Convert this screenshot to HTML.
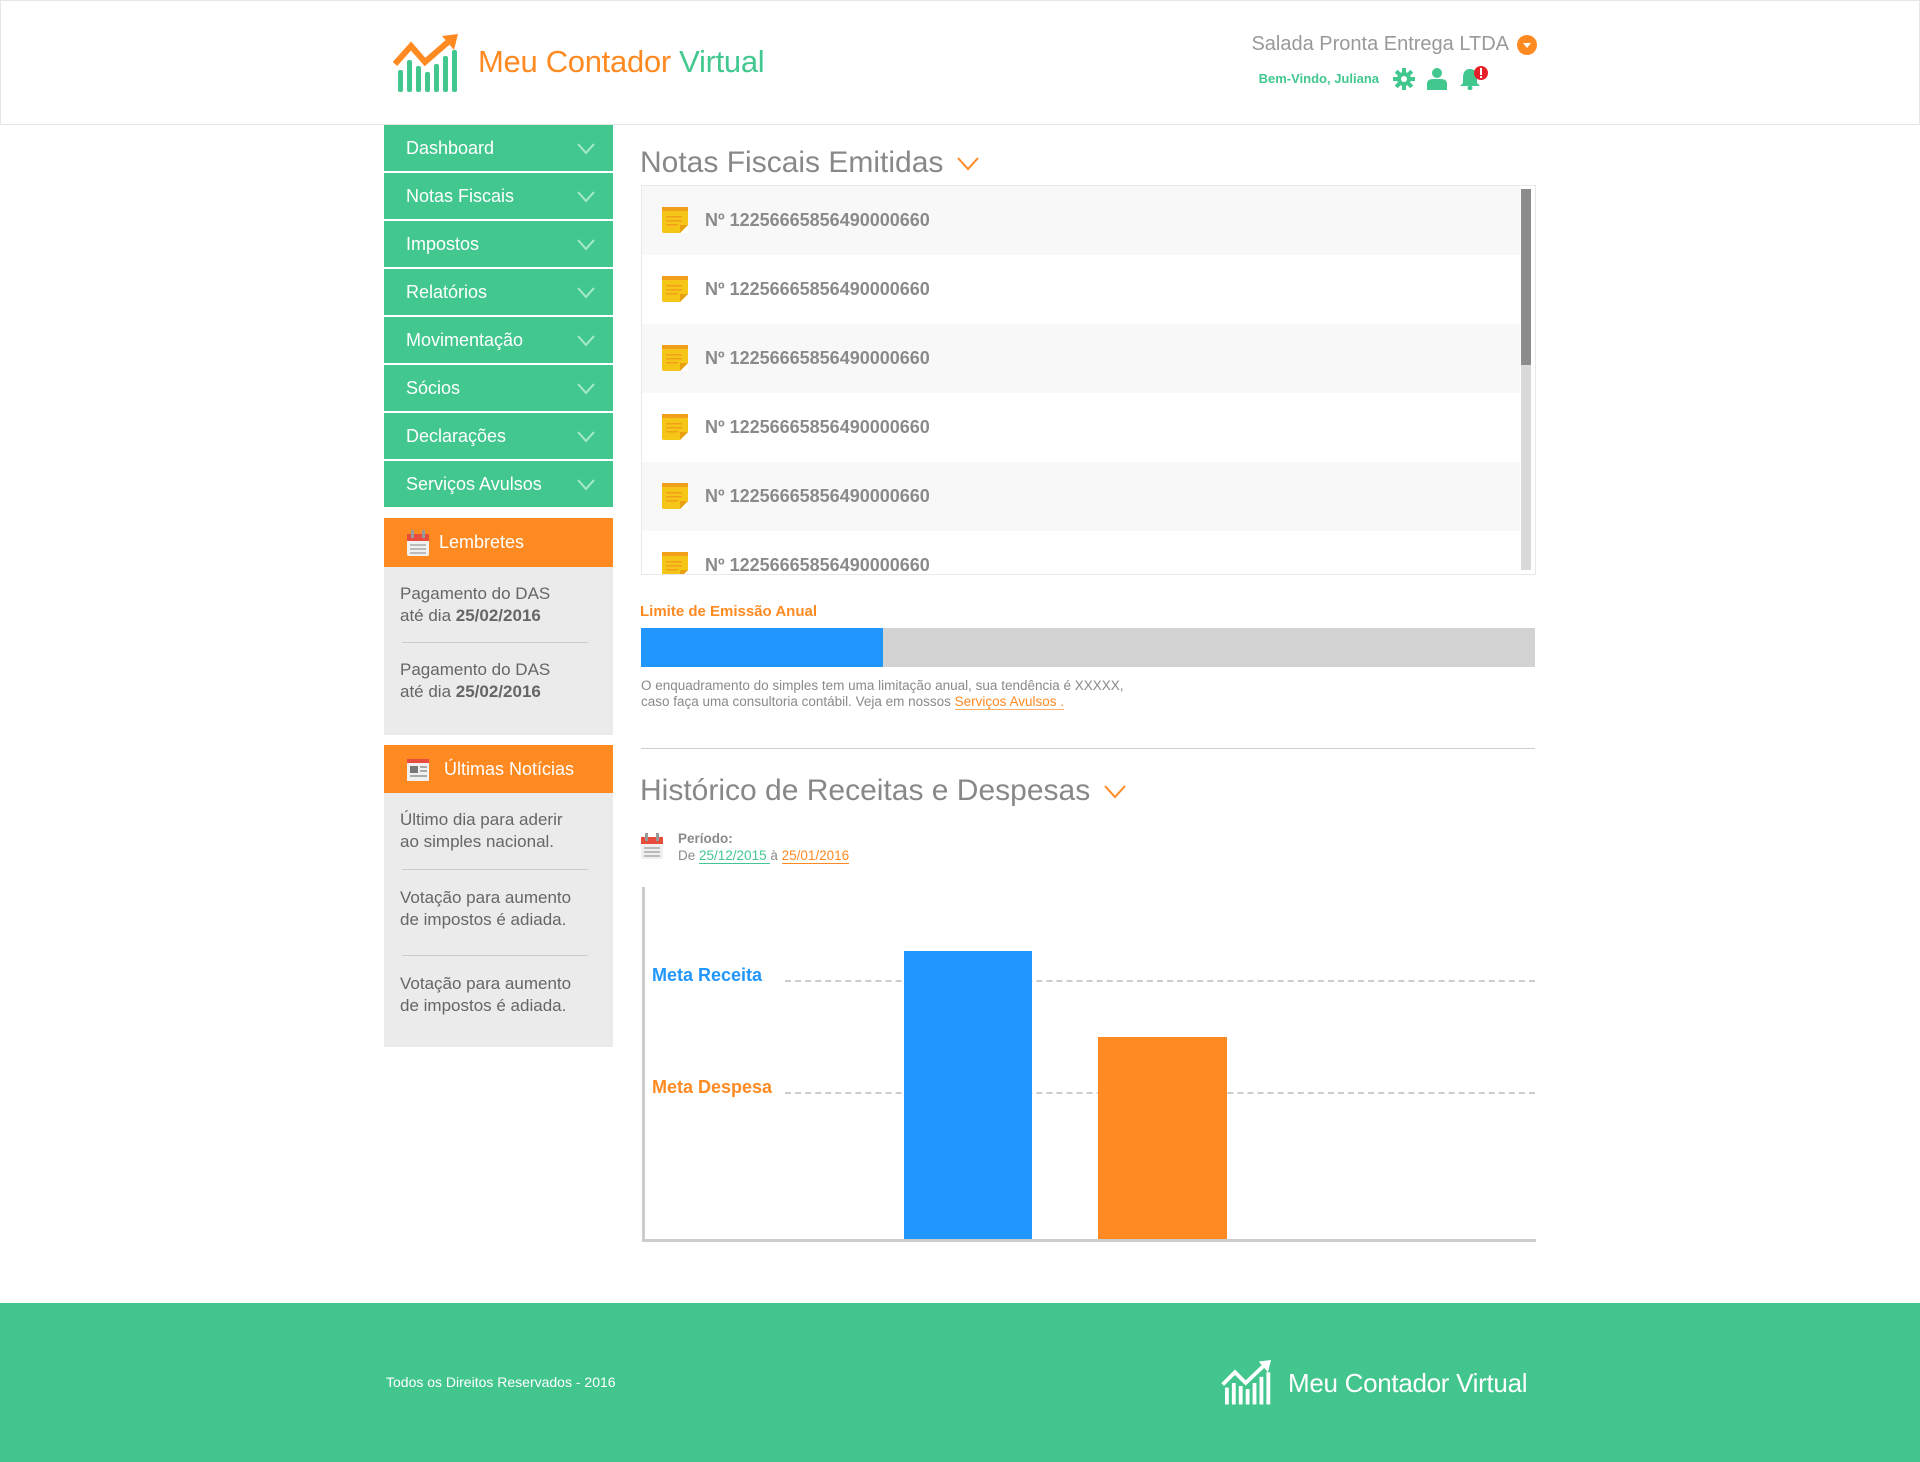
<!DOCTYPE html>
<html><head><meta charset="utf-8"><style>
*{margin:0;padding:0;box-sizing:border-box}
body{width:1920px;height:1462px;position:relative;background:#fff;font-family:"Liberation Sans",sans-serif;overflow:hidden}
.a{position:absolute}
.header{left:0;top:0;width:1920px;height:125px;border:1px solid #e6e6e6}
.menu{left:384px;width:229px;height:48px;background:#42c88f;border-bottom:2px solid #fff;color:#fff;font-size:18px;line-height:46px;padding-left:22px}
.chev{position:absolute;right:18px;top:18px}
.oh{left:384px;width:229px;height:49px;background:#ff8a22;color:#fff;font-size:18px;line-height:49px}
.gb{left:384px;width:229px;background:#ebebeb}
.it{left:400px;font-size:17px;color:#666;line-height:22px}
.sep{left:402px;width:186px;height:1px;background:#ccc}
.row{left:0;width:878px;height:69px;font-size:18px;font-weight:bold;color:#8a8a8a;line-height:69px;padding-left:63px}
.row svg{position:absolute;left:20px;top:21px}
.title{left:640px;font-size:30px;color:#888;white-space:nowrap}
.title svg{margin-left:14px;vertical-align:middle}
.dash{left:785px;width:750px;height:0;border-top:2px dashed #ccc}
</style></head><body>
<div class="a header"></div>
<svg class="a" style="left:392px;top:34px" width="72" height="60" viewBox="0 0 72 60">
<g fill="#42c88f"><rect x="6" y="36" width="5" height="22" rx="2"/><rect x="15" y="26" width="5" height="32" rx="2"/><rect x="24" y="32" width="5" height="26" rx="2"/><rect x="33" y="38" width="5" height="20" rx="2"/><rect x="42" y="30" width="5" height="28" rx="2"/><rect x="51" y="22" width="5" height="36" rx="2"/><rect x="60" y="16" width="5" height="42" rx="2"/></g>
<path d="M3 30 L19 12 L33 28 L56 8" stroke="#ff8a22" stroke-width="6" fill="none"/><path d="M50 2 L66 0 L62 16 Z" fill="#ff8a22"/>
</svg>
<div class="a" style="left:478px;top:44px;font-size:31px;color:#ff8a22;line-height:36px;letter-spacing:-0.3px">Meu Contador <span style="color:#42c88f">Virtual</span></div>
<div class="a" style="right:411px;top:32px;font-size:20px;color:#999;line-height:24px;text-align:right">Salada Pronta Entrega LTDA</div>
<svg class="a" style="left:1517px;top:35px" width="20" height="20"><circle cx="10" cy="10" r="10" fill="#ff8a22"/><path d="M6 8 L14 8 L10 13 Z" fill="#fff"/></svg>
<div class="a" style="right:541px;top:70px;font-family:'Liberation Sans Narrow','Liberation Sans',sans-serif;font-size:13px;font-weight:bold;color:#42c88f;line-height:18px">Bem-Vindo, Juliana</div>
<svg class="a" style="left:1393px;top:68px" width="22" height="22" viewBox="0 0 22 22"><g fill="#42c88f"><circle cx="11" cy="11" r="7"/><rect x="9" y="0" width="4" height="22"/><rect x="0" y="9" width="22" height="4"/><rect x="9" y="0" width="4" height="22" transform="rotate(45 11 11)"/><rect x="9" y="0" width="4" height="22" transform="rotate(-45 11 11)"/></g><circle cx="11" cy="11" r="3" fill="#fff"/></svg>
<svg class="a" style="left:1427px;top:68px" width="20" height="22"><circle cx="10" cy="5" r="5" fill="#42c88f"/><path d="M0 22 L0 16 Q0 11 6 11 L14 11 Q20 11 20 16 L20 22 Z" fill="#42c88f"/></svg>
<svg class="a" style="left:1460px;top:66px" width="28" height="24"><path d="M10 3 Q3 3 3 12 L3 17 L0 20 L20 20 L17 17 L17 12 Q17 3 10 3 Z" fill="#42c88f"/><circle cx="10" cy="22" r="2.5" fill="#42c88f"/><circle cx="21" cy="7" r="7" fill="#e8202a"/><rect x="20" y="2" width="2" height="7" fill="#fff"/><rect x="20" y="10" width="2" height="2" fill="#fff"/></svg>

<div class="a menu" style="top:125px">Dashboard<svg class="chev" width="18" height="12"><path d="M1 1 L9 10 L17 1" stroke="#a8e8cc" stroke-width="2" fill="none"/></svg></div>
<div class="a menu" style="top:173px">Notas Fiscais<svg class="chev" width="18" height="12"><path d="M1 1 L9 10 L17 1" stroke="#a8e8cc" stroke-width="2" fill="none"/></svg></div>
<div class="a menu" style="top:221px">Impostos<svg class="chev" width="18" height="12"><path d="M1 1 L9 10 L17 1" stroke="#a8e8cc" stroke-width="2" fill="none"/></svg></div>
<div class="a menu" style="top:269px">Relatórios<svg class="chev" width="18" height="12"><path d="M1 1 L9 10 L17 1" stroke="#a8e8cc" stroke-width="2" fill="none"/></svg></div>
<div class="a menu" style="top:317px">Movimentação<svg class="chev" width="18" height="12"><path d="M1 1 L9 10 L17 1" stroke="#a8e8cc" stroke-width="2" fill="none"/></svg></div>
<div class="a menu" style="top:365px">Sócios<svg class="chev" width="18" height="12"><path d="M1 1 L9 10 L17 1" stroke="#a8e8cc" stroke-width="2" fill="none"/></svg></div>
<div class="a menu" style="top:413px">Declarações<svg class="chev" width="18" height="12"><path d="M1 1 L9 10 L17 1" stroke="#a8e8cc" stroke-width="2" fill="none"/></svg></div>
<div class="a menu" style="top:461px;height:46px;border:none">Serviços Avulsos<svg class="chev" width="18" height="12"><path d="M1 1 L9 10 L17 1" stroke="#a8e8cc" stroke-width="2" fill="none"/></svg></div>

<div class="a oh" style="top:518px;padding-left:55px">Lembretes</div>
<svg class="a" style="left:406px;top:529px" width="24" height="28"><rect x="1" y="5" width="22" height="22" rx="2" fill="#f0f0f0"/><rect x="1" y="5" width="22" height="7" fill="#e84c3d"/><rect x="5" y="1" width="3" height="8" fill="#999"/><rect x="16" y="1" width="3" height="8" fill="#999"/><g fill="#bbb"><rect x="4" y="15" width="16" height="2"/><rect x="4" y="19" width="16" height="2"/><rect x="4" y="23" width="16" height="2"/></g></svg>
<div class="a gb" style="top:567px;height:168px"></div>
<div class="a it" style="top:583px">Pagamento do DAS<br>até dia <b>25/02/2016</b></div>
<div class="a sep" style="top:642px"></div>
<div class="a it" style="top:659px">Pagamento do DAS<br>até dia <b>25/02/2016</b></div>

<div class="a oh" style="top:745px;padding-left:60px">Últimas Notícias</div>
<svg class="a" style="left:406px;top:757px" width="26" height="26"><rect x="1" y="2" width="22" height="22" fill="#f0f0f0"/><rect x="1" y="2" width="22" height="4" fill="#e84c3d"/><rect x="4" y="9" width="8" height="7" fill="#777"/><g fill="#aaa"><rect x="14" y="9" width="7" height="2"/><rect x="14" y="13" width="7" height="2"/><rect x="4" y="18" width="17" height="2"/></g></svg>
<div class="a gb" style="top:793px;height:254px"></div>
<div class="a it" style="top:809px">Último dia para aderir<br>ao simples nacional.</div>
<div class="a sep" style="top:869px"></div>
<div class="a it" style="top:887px">Votação para aumento<br>de impostos é adiada.</div>
<div class="a sep" style="top:955px"></div>
<div class="a it" style="top:973px">Votação para aumento<br>de impostos é adiada.</div>

<div class="a title" style="top:146px">Notas Fiscais Emitidas<svg width="22" height="14"><path d="M1 1 L11 12 L21 1" stroke="#ff8a22" stroke-width="2" fill="none"/></svg></div>
<div class="a" style="left:641px;top:185px;width:895px;height:390px;border:1px solid #e8e8e8"></div>
<div class="a" style="left:642px;top:186px;width:892px;height:388px;overflow:hidden">
<div class="a row" style="top:0;background:#f8f8f8"><svg width="28" height="28"><rect x="0" y="0" width="26" height="26" rx="2" fill="#f5c518"/><rect x="0" y="0" width="26" height="4" fill="#f2a01a"/><path d="M18 26 L26 18 L26 26 Z" fill="#fff"/><path d="M18 26 L18 18 L26 18 Z" fill="#e8a010"/><g fill="#f2a01a"><rect x="4" y="9" width="16" height="1.5"/><rect x="4" y="13" width="16" height="1.5"/><rect x="4" y="17" width="12" height="1.5"/></g></svg>Nº 12256665856490000660</div>
<div class="a row" style="top:69px"><svg width="28" height="28"><rect x="0" y="0" width="26" height="26" rx="2" fill="#f5c518"/><rect x="0" y="0" width="26" height="4" fill="#f2a01a"/><path d="M18 26 L26 18 L26 26 Z" fill="#fff"/><path d="M18 26 L18 18 L26 18 Z" fill="#e8a010"/><g fill="#f2a01a"><rect x="4" y="9" width="16" height="1.5"/><rect x="4" y="13" width="16" height="1.5"/><rect x="4" y="17" width="12" height="1.5"/></g></svg>Nº 12256665856490000660</div>
<div class="a row" style="top:138px;background:#f8f8f8"><svg width="28" height="28"><rect x="0" y="0" width="26" height="26" rx="2" fill="#f5c518"/><rect x="0" y="0" width="26" height="4" fill="#f2a01a"/><path d="M18 26 L26 18 L26 26 Z" fill="#fff"/><path d="M18 26 L18 18 L26 18 Z" fill="#e8a010"/><g fill="#f2a01a"><rect x="4" y="9" width="16" height="1.5"/><rect x="4" y="13" width="16" height="1.5"/><rect x="4" y="17" width="12" height="1.5"/></g></svg>Nº 12256665856490000660</div>
<div class="a row" style="top:207px"><svg width="28" height="28"><rect x="0" y="0" width="26" height="26" rx="2" fill="#f5c518"/><rect x="0" y="0" width="26" height="4" fill="#f2a01a"/><path d="M18 26 L26 18 L26 26 Z" fill="#fff"/><path d="M18 26 L18 18 L26 18 Z" fill="#e8a010"/><g fill="#f2a01a"><rect x="4" y="9" width="16" height="1.5"/><rect x="4" y="13" width="16" height="1.5"/><rect x="4" y="17" width="12" height="1.5"/></g></svg>Nº 12256665856490000660</div>
<div class="a row" style="top:276px;background:#f8f8f8"><svg width="28" height="28"><rect x="0" y="0" width="26" height="26" rx="2" fill="#f5c518"/><rect x="0" y="0" width="26" height="4" fill="#f2a01a"/><path d="M18 26 L26 18 L26 26 Z" fill="#fff"/><path d="M18 26 L18 18 L26 18 Z" fill="#e8a010"/><g fill="#f2a01a"><rect x="4" y="9" width="16" height="1.5"/><rect x="4" y="13" width="16" height="1.5"/><rect x="4" y="17" width="12" height="1.5"/></g></svg>Nº 12256665856490000660</div>
<div class="a row" style="top:345px"><svg width="28" height="28"><rect x="0" y="0" width="26" height="26" rx="2" fill="#f5c518"/><rect x="0" y="0" width="26" height="4" fill="#f2a01a"/><path d="M18 26 L26 18 L26 26 Z" fill="#fff"/><path d="M18 26 L18 18 L26 18 Z" fill="#e8a010"/><g fill="#f2a01a"><rect x="4" y="9" width="16" height="1.5"/><rect x="4" y="13" width="16" height="1.5"/><rect x="4" y="17" width="12" height="1.5"/></g></svg>Nº 12256665856490000660</div>
</div>
<div class="a" style="left:1521px;top:189px;width:10px;height:381px;background:#d9d9d9"></div>
<div class="a" style="left:1521px;top:189px;width:10px;height:176px;background:#8c8c8c"></div>

<div class="a" style="left:640px;top:603px;font-size:15px;font-weight:bold;color:#ff8a22">Limite de Emissão Anual</div>
<div class="a" style="left:641px;top:628px;width:894px;height:39px;background:#d2d2d2"></div>
<div class="a" style="left:641px;top:628px;width:242px;height:39px;background:#2196fc"></div>
<div class="a" style="left:641px;top:678px;font-size:13.5px;color:#8a8a8a;line-height:16px">O enquadramento do simples tem uma limitação anual, sua tendência é XXXXX,<br>caso faça uma consultoria contábil. Veja em nossos <span style="color:#ff8a22;border-bottom:1px solid #ffb070">Serviços Avulsos .</span></div>
<div class="a" style="left:641px;top:748px;width:894px;height:1px;background:#ccc"></div>

<div class="a title" style="top:774px">Histórico de Receitas e Despesas<svg width="22" height="14"><path d="M1 1 L11 12 L21 1" stroke="#ff8a22" stroke-width="2" fill="none"/></svg></div>
<svg class="a" style="left:640px;top:832px" width="24" height="28"><rect x="1" y="5" width="22" height="22" rx="2" fill="#f0f0f0"/><rect x="1" y="5" width="22" height="7" fill="#e84c3d"/><rect x="5" y="1" width="3" height="8" fill="#999"/><rect x="16" y="1" width="3" height="8" fill="#999"/><g fill="#bbb"><rect x="4" y="15" width="16" height="2"/><rect x="4" y="19" width="16" height="2"/><rect x="4" y="23" width="16" height="2"/></g></svg>
<div class="a" style="left:678px;top:830px;font-size:13.5px;color:#8a8a8a;line-height:17px"><b>Período:</b><br>De <span style="color:#42c88f;border-bottom:1px solid #42c88f">25/12/2015 </span> à <span style="color:#ff8a22;border-bottom:1px solid #ff8a22">25/01/2016</span></div>

<div class="a" style="left:642px;top:887px;width:3px;height:355px;background:#ccc"></div>
<div class="a" style="left:642px;top:1239px;width:894px;height:3px;background:#ccc"></div>
<div class="a dash" style="top:980px"></div>
<div class="a dash" style="top:1092px"></div>
<div class="a" style="left:652px;top:965px;font-size:18px;font-weight:bold;color:#2196fc">Meta Receita</div>
<div class="a" style="left:652px;top:1077px;font-size:18px;font-weight:bold;color:#ff8a22">Meta Despesa</div>
<div class="a" style="left:904px;top:951px;width:128px;height:288px;background:#2196fc"></div>
<div class="a" style="left:1098px;top:1037px;width:129px;height:202px;background:#ff8a22"></div>

<div class="a" style="left:0;top:1303px;width:1920px;height:159px;background:#43c68e"></div>
<div class="a" style="left:386px;top:1374px;font-size:14px;color:#fff">Todos os Direitos Reservados - 2016</div>
<svg class="a" style="left:1220px;top:1360px" width="56" height="46" viewBox="0 0 72 60">
<g fill="#fff"><rect x="6" y="36" width="5" height="22"/><rect x="15" y="30" width="5" height="28"/><rect x="24" y="34" width="5" height="24"/><rect x="33" y="38" width="5" height="20"/><rect x="42" y="30" width="5" height="28"/><rect x="51" y="22" width="5" height="36"/><rect x="60" y="16" width="5" height="42"/></g>
<path d="M3 32 L19 16 L33 30 L56 8" stroke="#fff" stroke-width="5" fill="none"/><path d="M50 2 L66 0 L62 16 Z" fill="#fff"/>
</svg>
<div class="a" style="left:1288px;top:1367px;font-size:26px;color:#fff;line-height:32px;letter-spacing:-0.3px">Meu Contador Virtual</div>
</body></html>
